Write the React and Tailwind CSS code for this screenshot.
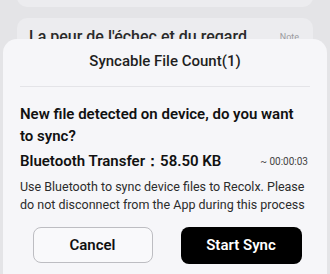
import React from 'react';

const App = () => {
  return (
    <div className="relative w-[330px] h-[274px] overflow-hidden bg-[#e4e4e7]" style={{ fontFamily: 'Roboto, "Noto Sans", sans-serif' }}>
      {/* list behind the sheet */}
      <div className="flex flex-col gap-[11px] px-[17px] mt-[-40px]">
        <div className="h-[47px] rounded-[10px] bg-[#ececef]" />
        <div className="h-[60px] rounded-[10px] bg-[#ececef] flex items-start justify-between pl-[12px] pr-[14px] pt-[9px]">
          <span className="text-[16px] font-medium text-[#2a2a2a] leading-[20px]">La peur de l'échec et du regard</span>
          <span className="text-[9px] text-[#9b9b9f] leading-[20px]">Note</span>
        </div>
      </div>

      {/* bottom sheet */}
      <div className="absolute left-[3px] right-[3px] top-[39px] h-[260px] rounded-t-[14px] bg-[#f6f6f9] px-[17px]">
        <div className="h-[47px] flex items-center justify-center pb-[3px] text-[15px] font-medium text-[#1f1f1f]">
          Syncable File Count(1)
        </div>
        <div className="h-px bg-[#e4e4e8]" />
        <div className="pt-[16px] text-[15px] font-semibold leading-[22px] text-[#111]">
          New file detected on device, do you want to sync?
        </div>
        <div className="mt-[3px] flex items-center justify-between h-[22px]">
          <span className="text-[15px] font-semibold text-[#111]">Bluetooth Transfer：58.50 KB</span>
          <span className="text-[10px] text-[#444] pr-[2px]">~ 00:00:03</span>
        </div>
        <div className="mt-[6px] text-[12.5px] leading-[18px] text-[#2c2c2c]">
          Use Bluetooth to sync device files to Recolx. Please do not disconnect from the App during this process
        </div>
        <div className="mt-[13px] flex justify-center gap-[28px] pl-[4px]">
          <button className="w-[120px] h-[36px] rounded-[8px] border border-[#bdbdc2] bg-[#f9f9fb] text-[15px] font-semibold text-[#111]">Cancel</button>
          <button className="w-[121px] h-[37px] rounded-[8px] bg-black text-[15px] font-semibold text-white">Start Sync</button>
        </div>
      </div>
    </div>
  );
};

export default App;
